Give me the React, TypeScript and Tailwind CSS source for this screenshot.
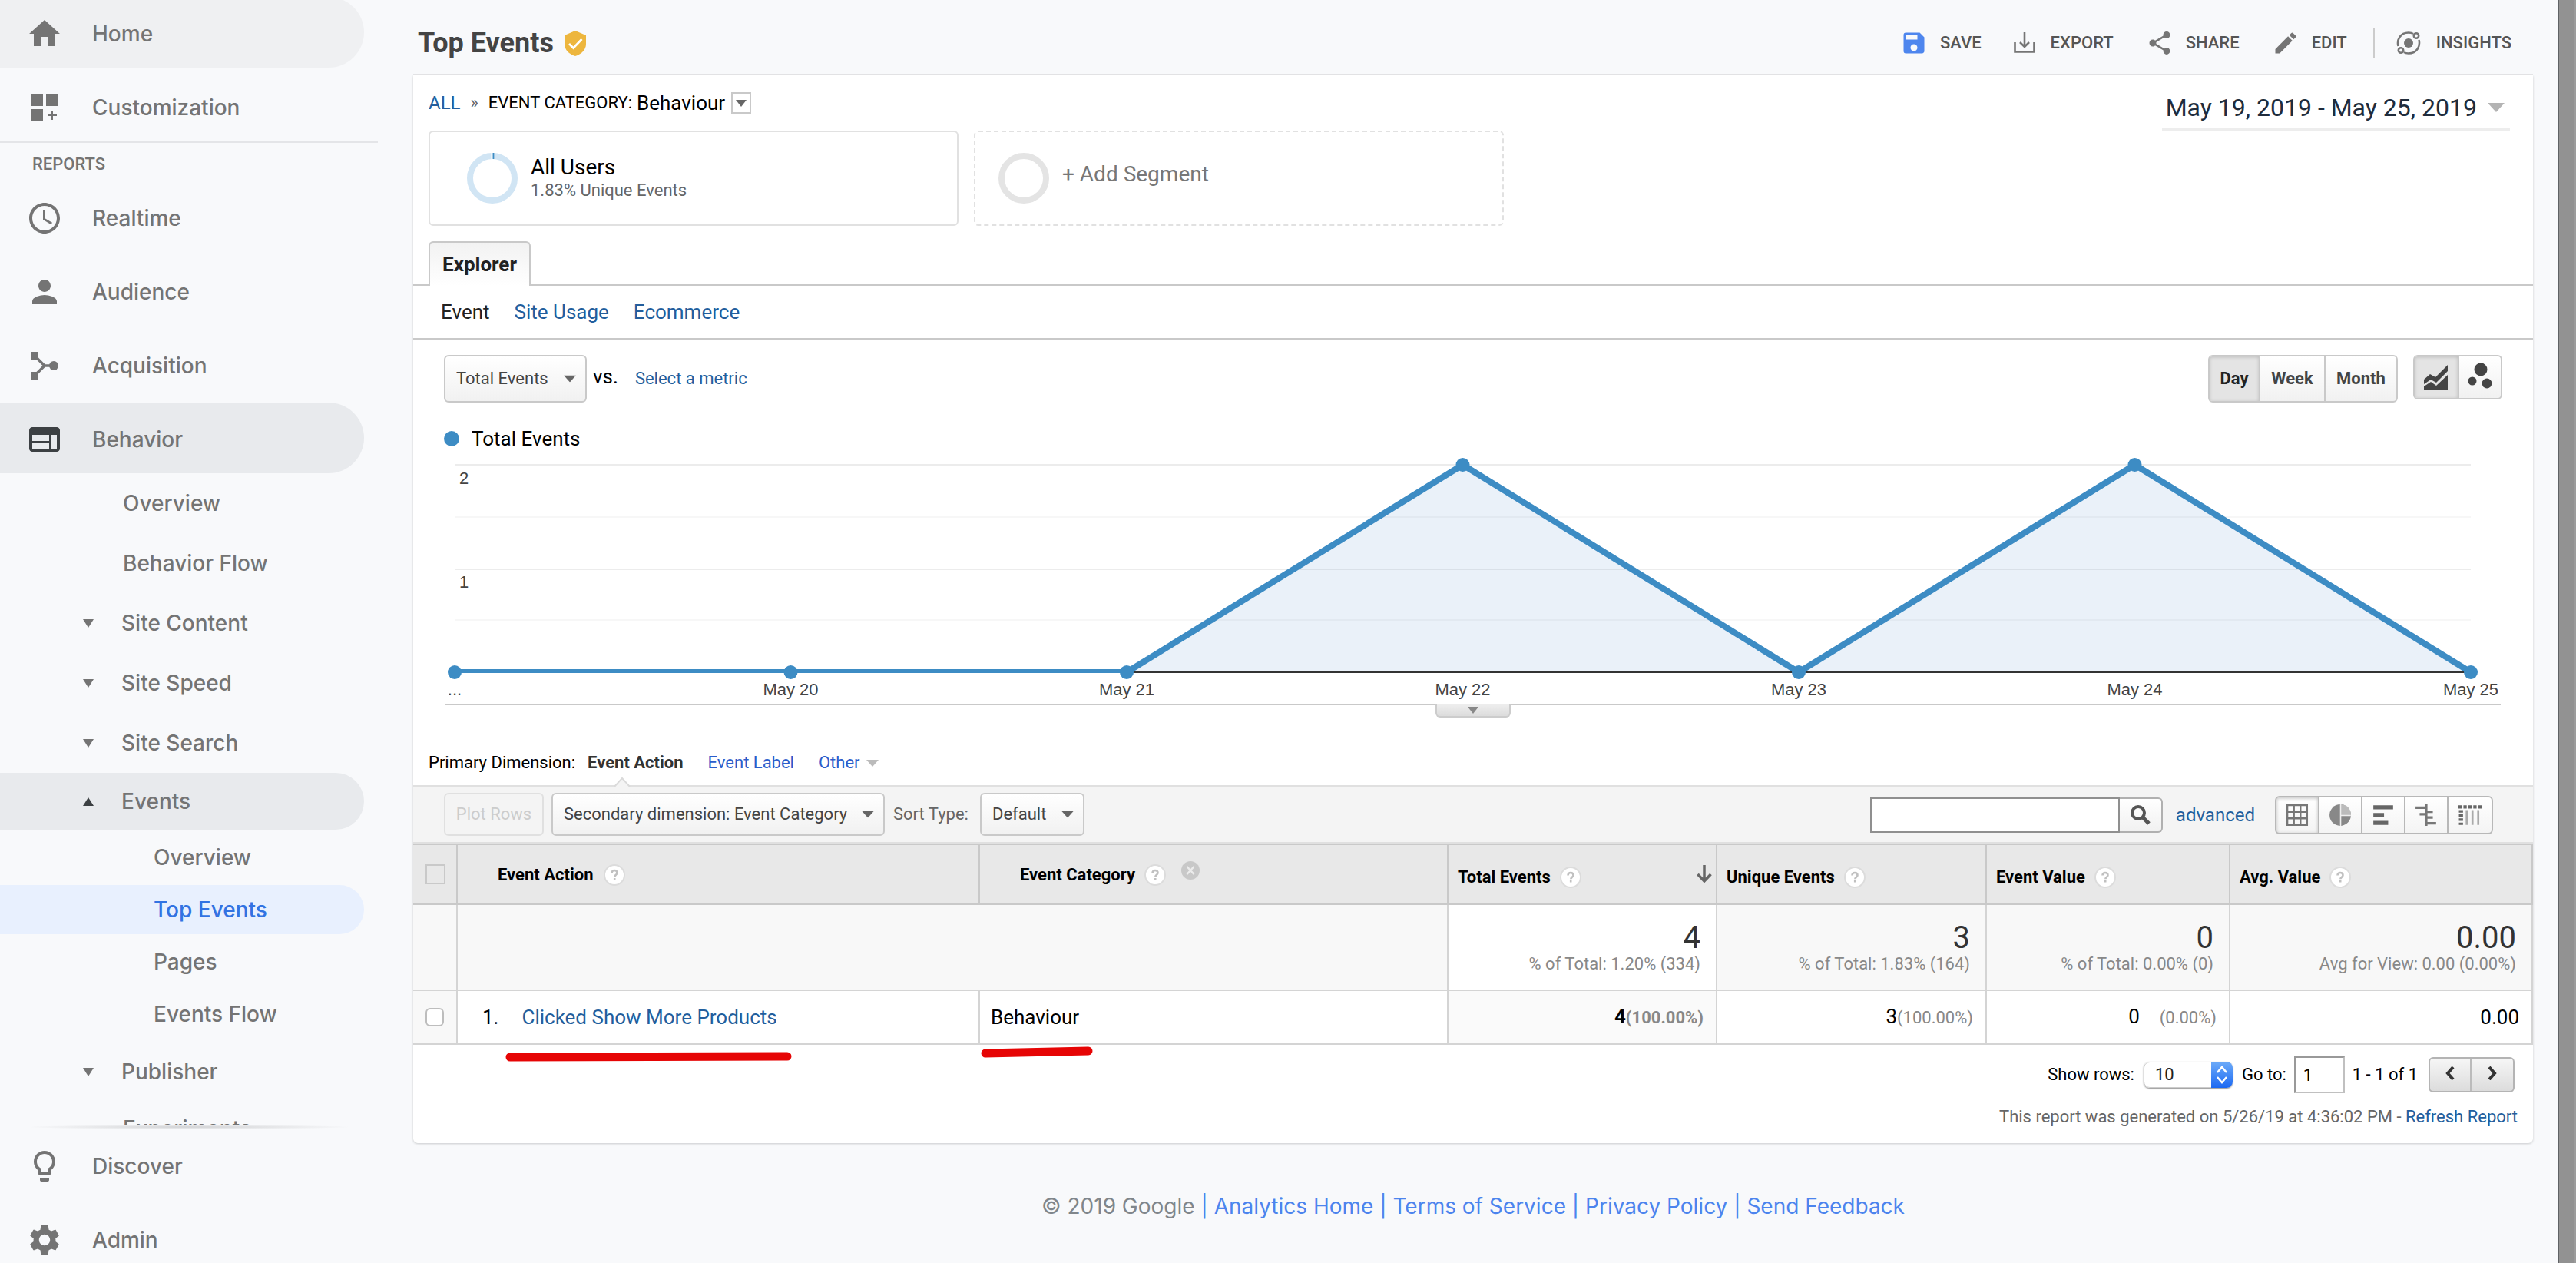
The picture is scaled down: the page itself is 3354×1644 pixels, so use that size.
import React from 'react';
import clsx from 'clsx';
import {
  MdAccessTime,
  MdEdit,
  MdHome,
  MdLightbulbOutline,
  MdPerson,
  MdSave,
  MdSettings,
  MdShare,
  MdWeb,
} from 'react-icons/md';

const DAYS = [
  { label: '...', value: 0 },
  { label: 'May 20', value: 0 },
  { label: 'May 21', value: 0 },
  { label: 'May 22', value: 2 },
  { label: 'May 23', value: 0 },
  { label: 'May 24', value: 2 },
  { label: 'May 25', value: 0 },
];

const CustomizationIcon = ({ className }: { className?: string }) => (
  <svg viewBox="0 0 24 24" className={className} fill="currentColor">
    <path d="M3 3h8v8H3zM13 3h8v8h-8zM3 13h8v8H3zM16.5 14h1v2.5H20v1h-2.5V20h-1v-2.5H14v-1h2.5z" />
  </svg>
);

const AcquisitionIcon = ({ className }: { className?: string }) => (
  <svg viewBox="0 0 24 24" className={className} fill="currentColor">
    <path d="M3 3h5v5H3zM3 16h5v5H3z" />
    <circle cx="18" cy="12" r="3" />
    <path d="M6 6l6 6-6 6M12 12h5" fill="none" stroke="currentColor" strokeWidth="1.8" />
  </svg>
);

const ExportIcon = ({ className }: { className?: string }) => (
  <svg viewBox="0 0 28 28" className={className} fill="none" stroke="currentColor" strokeWidth="2.6">
    <path d="M1.5 13v12.5h25V13M14 0v18M8 13l6 6 6-6" />
  </svg>
);

const InsightsIcon = ({ className }: { className?: string }) => (
  <svg viewBox="0 0 32 32" className={className} fill="none" stroke="currentColor" strokeWidth="2.6">
    <circle cx="16" cy="16" r="6" fill="currentColor" stroke="none" />
    <path d="M2.5 20C.5 12 5 2.5 16 2.5c2.5 0 4.5.5 6 1.5M29.5 12c2 8-2.500 17.500-13.500 17.500-2.500 0-4.500-.5-6-1.500" />
    <circle cx="26" cy="6.5" r="3.2" />
    <circle cx="6" cy="25.5" r="3.2" />
  </svg>
);

const ShieldIcon = () => (
  <svg viewBox="0 0 28 33" className="h-[33px] w-7">
    <path d="M14 0l14 6v11c0 8-6 13.500-14 16C6 30.500 0 25 0 17V6z" fill="#edb63e" />
    <path d="M6 17l5.500 5.500L22.500 11" fill="none" stroke="#fff" strokeWidth="2.8" />
  </svg>
);

const Caret = ({ className, up = false }: { className?: string; up?: boolean }) => (
  <svg viewBox="0 0 14 10" preserveAspectRatio="none" className={clsx('shrink-0', className)} fill="currentColor">
    <path d={up ? 'M0 10h14L7 0z' : 'M0 0h14L7 10z'} />
  </svg>
);

const Help = () => (
  <svg viewBox="0 0 28 28" className="h-7 w-7 shrink-0" role="img" aria-label="Help">
    <circle cx="14" cy="14" r="13" fill="#fff" stroke="#dcdcdc" strokeWidth="2" />
    <path
      d="M10.500 11.500c0-2 1.500-3.500 3.500-3.500s3.500 1.300 3.500 3.200c0 2.400-3.200 2.600-3.200 5.100M14.200 18v2.600"
      fill="none"
      stroke="#c0c0c0"
      strokeWidth="2.6"
    />
  </svg>
);

interface NavItemProps {
  label: string;
  icon: React.ReactNode;
  className?: string;
}

function NavItem({ label, icon, className }: NavItemProps) {
  return (
    <a href="#" className={clsx('flex h-[92px] w-[474px] items-center rounded-r-full pt-1 pl-[34px]', className)}>
      {icon}
      <span className="pl-[38px]">{label}</span>
    </a>
  );
}

function NavGroup({ label, open = false }: { label: string; open?: boolean }) {
  return (
    <button
      type="button"
      className={clsx(
        'flex w-[474px] shrink-0 items-center gap-9 pl-[108px] text-left',
        open ? 'h-[74px] rounded-r-full bg-[#e8eaed]' : 'h-[78px]'
      )}
    >
      <Caret up={open} className={clsx('h-[11px] w-[14px]', open && 'text-[#3c4043]')} />
      {label}
    </button>
  );
}

function Sidebar() {
  const icon = 'h-12 w-12';
  return (
    <aside className="flex w-[492px] shrink-0 flex-col font-['Inter',sans-serif] text-[28px] leading-9 font-medium text-[#747474]">
      <nav className="-mt-1 flex min-h-0 flex-1 flex-col overflow-hidden *:shrink-0">
        <NavItem label="Home" icon={<MdHome className={icon} />} className="bg-[#eff0f2]" />
        <NavItem label="Customization" icon={<CustomizationIcon className={icon} />} className="mt-1" />
        <div className="h-[52px] border-t-2 border-[#e4e5e8] pt-3 pl-[42px] font-['Roboto',sans-serif] text-[22px] leading-8">
          REPORTS
        </div>
        <NavItem label="Realtime" icon={<MdAccessTime className={icon} />} />
        <NavItem label="Audience" icon={<MdPerson className={icon} />} className="mt-1" />
        <NavItem label="Acquisition" icon={<AcquisitionIcon className={icon} />} className="mt-1" />
        <NavItem
          label="Behavior"
          icon={<MdWeb className="h-12 w-12 text-[#3c4043]" />}
          className="mt-1 bg-[#e8eaed]"
        />
        {['Overview', 'Behavior Flow'].map((label) => (
          <a key={label} href="#" className="flex h-[78px] items-center pl-40">
            {label}
          </a>
        ))}
        <NavGroup label="Site Content" />
        <NavGroup label="Site Speed" />
        <NavGroup label="Site Search" />
        <NavGroup label="Events" open />
        <div className="pb-1">
          {['Overview', 'Top Events', 'Pages', 'Events Flow'].map((label) => (
            <a
              key={label}
              href="#"
              className={clsx(
                'mt-1 flex h-16 w-[474px] items-center rounded-r-full pl-[200px]',
                label === 'Top Events' && 'bg-[#e8f0fe] text-[#3273e2]'
              )}
            >
              {label}
            </a>
          ))}
        </div>
        <NavGroup label="Publisher" />
        <a href="#" className="flex h-[70px] items-center pl-40">
          Experiments
        </a>
      </nav>
      <div className="mx-8 h-[6px] rounded-[50%] bg-radial from-[#d0d1d3] to-[#f8f9fb] to-70%" />
      <NavItem label="Discover" icon={<MdLightbulbOutline className={icon} />} />
      <div className="mt-1 h-[78px] overflow-hidden">
        <NavItem label="Admin" icon={<MdSettings className={icon} />} />
      </div>
    </aside>
  );
}

function ReportHeader() {
  const action = 'flex items-center gap-5';
  return (
    <header className="flex h-[98px] items-center justify-between border-b-2 border-[#e3e4e6] pt-4 pr-7 pl-[6px]">
      <h1 className="flex items-center gap-[14px] text-[36px] leading-10 font-bold text-[#444]">
        Top Events
        <ShieldIcon />
      </h1>
      <div className="flex items-center gap-[42px] text-[22px] leading-7 font-medium text-[#555]">
        <button type="button" className="flex items-center gap-4">
          <MdSave className="h-9 w-9 text-[#4e86ee]" />
          SAVE
        </button>
        <button type="button" className={action}>
          <ExportIcon className="h-7 w-7 text-[#757575]" />
          EXPORT
        </button>
        <button type="button" className="flex items-center gap-4">
          <MdShare className="h-9 w-9 text-[#757575]" />
          SHARE
        </button>
        <button type="button" className="flex items-center gap-4">
          <MdEdit className="h-9 w-9 text-[#757575]" />
          EDIT
        </button>
        <div className="-ml-2 flex items-center gap-7">
          <span className="h-[38px] w-[2px] bg-[#ccc]" />
          <button type="button" className={action}>
            <InsightsIcon className="h-8 w-8 text-[#757575]" />
            INSIGHTS
          </button>
        </div>
      </div>
    </header>
  );
}

function Segments() {
  return (
    <div className="flex gap-5 pl-5">
      <button
        type="button"
        className="flex h-[124px] w-[690px] items-center gap-[17px] rounded-md border-2 border-[#e1e1e1] pl-12 text-left"
      >
        <svg viewBox="0 0 66 66" className="h-[66px] w-[66px]" fill="none" strokeWidth="8">
          <circle cx="33" cy="33" r="29" stroke="#d1e5f4" />
          <path d="M34 0v8" stroke="#fff" strokeWidth="5" />
          <path d="M34.500 0v8" stroke="#3d8cc4" strokeWidth="2" />
        </svg>
        <span>
          <span className="block text-[28px] leading-8 text-black">All Users</span>
          <span className="block text-[22px] leading-7 text-[#666]">1.83% Unique Events</span>
        </span>
      </button>
      <button
        type="button"
        className="flex h-[124px] w-[690px] items-center gap-[17px] rounded-md border-2 border-dashed border-[#e1e1e1] pl-[30px] text-left"
      >
        <svg viewBox="0 0 66 66" className="h-[66px] w-[66px]" fill="none">
          <circle cx="33" cy="33" r="29" stroke="#e4e4e4" strokeWidth="8" />
        </svg>
        <span className="pb-[10px] text-[28px] leading-8 text-[#777]">+ Add Segment</span>
      </button>
    </div>
  );
}

interface DropdownProps {
  label: string;
  value: string;
  className: string;
}

function Dropdown({ label, value, className }: DropdownProps) {
  return (
    <div className={clsx('relative text-[22px] leading-7 text-[#444]', className)}>
      <select
        aria-label={label}
        className="h-full w-full appearance-none rounded-md border-2 border-[#c9c9c9] bg-linear-to-b from-white to-[#f1f1f1] pl-[14px]"
      >
        <option>{value}</option>
      </select>
      <Caret className="pointer-events-none absolute top-1/2 right-[14px] h-[9px] w-4 -translate-y-1/2 text-[#666]" />
    </div>
  );
}

function ChartControls() {
  return (
    <div className="flex items-start justify-between pt-5 pr-10 pl-10">
      <div className="flex items-center">
        <Dropdown label="Metric" value="Total Events" className="h-[62px] w-[186px]" />
        <span className="pb-[6px] pl-2 text-[26px] leading-8">vs.</span>
        <a href="#" className="pl-[22px] text-[22px] leading-7 text-[#225e9d]">
          Select a metric
        </a>
      </div>
      <div className="flex items-start gap-5">
        <div className="flex h-[62px] divide-x-2 divide-[#c9c9c9] overflow-hidden rounded-md border-2 border-[#c9c9c9] bg-linear-to-b from-white to-[#f1f1f1] text-[22px] leading-7 font-bold text-[#444]">
          <button type="button" className="w-[66px] bg-[#e4e4e4] text-[#222] shadow-[inset_0_1px_4px_#bbb]">
            Day
          </button>
          <button type="button" className="w-[85px]">
            Week
          </button>
          <button type="button" className="w-[92px]">
            Month
          </button>
        </div>
        <div className="flex h-[58px] overflow-hidden rounded-md border-2 border-[#c9c9c9] bg-linear-to-b from-white to-[#f1f1f1] text-[#444]">
          <button
            type="button"
            aria-label="Line chart"
            className="flex w-[58px] items-center justify-center border-r-2 border-[#c9c9c9] bg-[#e4e4e4] shadow-[inset_0_1px_4px_#bbb]"
          >
            <svg viewBox="0 0 32 32" className="h-8 w-8" fill="currentColor">
              <path d="M0 19l8-7 7 4L31 0v8L16 23l-7-4-9 6z" />
              <path d="M0 32v-4l9-6 7 5 15-14v19z" />
            </svg>
          </button>
          <button type="button" aria-label="Motion chart" className="flex w-[54px] items-center justify-center">
            <svg viewBox="0 0 34 34" className="mb-1 h-[34px] w-[34px]" fill="currentColor">
              <circle cx="18" cy="9" r="8.5" />
              <circle cx="7" cy="24" r="5.5" />
              <circle cx="26" cy="27" r="6.5" />
            </svg>
          </button>
        </div>
      </div>
    </div>
  );
}

function EventsChart() {
  const baseline = 289;
  const points = DAYS.map((day, i) => ({
    ...day,
    x: 54 + i * 437.5,
    y: baseline - day.value * 135,
  }));
  const line = points.map((p) => `${p.x},${p.y}`).join(' ');

  return (
    <svg
      viewBox="0 0 2760 330"
      className="block w-full font-['Liberation_Sans',Arial,sans-serif] text-[22px]"
      role="img"
      aria-label="Total Events per day"
    >
      <defs>
        <clipPath id="plot">
          <rect x="54" y="0" width="2625" height="290" />
        </clipPath>
      </defs>
      <path d="M54 19h2625M54 155h2625" stroke="#ececec" strokeWidth="2" />
      <path d="M54 87h2625M54 221h2625" stroke="#f7f7f7" strokeWidth="2" />
      <polygon points={`54,${baseline} ${line} 2679,${baseline}`} fill="#3d84c4" fillOpacity="0.11" />
      <path d={`M54 ${baseline}h2625`} stroke="#333" strokeWidth="2" />
      <polyline points={line} fill="none" stroke="#3d8cc4" strokeWidth="8" clipPath="url(#plot)" />
      {points.map((p) => (
        <circle key={p.label} cx={p.x} cy={p.y} r="9" fill="#3d8cc4" />
      ))}
      <g fill="#444">
        <text x="60" y="44">2</text>
        <text x="60" y="179">1</text>
        {points.map((p) => (
          <text key={p.label} x={p.x} y="319" textAnchor="middle">
            {p.label}
          </text>
        ))}
      </g>
    </svg>
  );
}

const VIEW_ICONS: { name: string; icon: React.ReactNode }[] = [
  {
    name: 'Data table',
    icon: <path d="M2 2h24v24H2zM10 2v24M18 2v24M2 10h24M2 18h24" fill="none" stroke="#777" strokeWidth="2.2" />,
  },
  {
    name: 'Percentage',
    icon: (
      <>
        <circle cx="14" cy="14" r="13" fill="#888" />
        <path d="M15 1v13h12A12 12 0 0 0 15 1z" fill="#bbb" />
        <path d="M14.500 1v13.500H27M14.500 14v13" stroke="#eee" strokeWidth="1.5" fill="none" />
      </>
    ),
  },
  {
    name: 'Performance',
    icon: <path d="M2 2h24v5H2zM2 11.500h13v5H2zM2 21h18v5H2z" fill="#666" />,
  },
  {
    name: 'Comparison',
    icon: (
      <path d="M14 1v26M1 5h13M6 13h8M14 10h8M14 17h8M14 24h12" fill="none" stroke="#777" strokeWidth="3" />
    ),
  },
  {
    name: 'Pivot',
    icon: (
      <>
        <path d="M0 4h28" stroke="#666" strokeWidth="4" strokeDasharray="4 2" />
        <path d="M3 8v18" stroke="#666" strokeWidth="5" strokeDasharray="3 2" />
        <path d="M10 8v18M17 8v18M24 8v18" stroke="#aaa" strokeWidth="2.5" />
      </>
    ),
  },
];

function TableToolbar() {
  return (
    <div className="flex h-[74px] items-center justify-between border-b-2 border-[#e0e0e0] bg-[#f4f4f4] pr-[52px] pl-10">
      <div className="flex items-center text-[22px] leading-7">
        <button type="button" disabled className="h-14 w-[130px] rounded-md border-2 border-[#e0e0e0] text-[#ccc]">
          Plot Rows
        </button>
        <Dropdown
          label="Secondary dimension"
          value="Secondary dimension: Event Category"
          className="ml-[10px] h-14 w-[434px]"
        />
        <span className="pr-[15px] pl-[11px] text-[#666]">Sort Type:</span>
        <Dropdown label="Sort Type" value="Default" className="h-14 w-[136px]" />
      </div>
      <div className="flex items-center pt-[2px]">
        <div className="flex h-[46px]">
          <input
            type="text"
            aria-label="Search"
            className="w-[325px] border-2 border-[#8f8f8f] bg-white px-2 text-[22px]"
          />
          <button
            type="button"
            aria-label="Search"
            className="flex w-14 items-center justify-center rounded-r-md border-2 border-l-0 border-[#b0b0b0] bg-linear-to-b from-white to-[#f1f1f1]"
          >
            <svg viewBox="0 0 28 28" className="h-7 w-7" fill="none" stroke="#555">
              <circle cx="11" cy="11" r="8" strokeWidth="4" />
              <path d="M17 17l8 8" strokeWidth="5" />
            </svg>
          </button>
        </div>
        <a href="#" className="pr-[26px] pl-[17px] text-[24px] leading-7 text-[#225e9d]">
          advanced
        </a>
        <div className="flex h-[50px] divide-x-2 divide-[#b8b8b8] overflow-hidden rounded-md border-2 border-[#b8b8b8] bg-linear-to-b from-white to-[#f4f4f4]">
          {VIEW_ICONS.map(({ name, icon }) => (
            <button
              key={name}
              type="button"
              aria-label={name}
              className={clsx(
                'flex w-14 items-center justify-center',
                name === 'Data table' && 'shadow-[inset_0_1px_4px_#bbb]'
              )}
            >
              <svg viewBox="0 0 28 28" className="h-[30px] w-[30px]">
                {icon}
              </svg>
            </button>
          ))}
        </div>
      </div>
    </div>
  );
}

function MetricHeader({ label, sorted = false }: { label: string; sorted?: boolean }) {
  return (
    <th className="border-y-2 border-r-2 border-[#c9c9c9] bg-[#e8e8e8] pt-2 pr-1 pl-3 text-left">
      <div className="flex items-center gap-3">
        {label}
        <Help />
        {sorted && (
          <svg viewBox="0 0 22 24" className="mb-2 ml-auto h-6 w-[22px]" fill="none" stroke="#666" strokeWidth="3.5">
            <path d="M11 0v21M2.500 12l8.500 9 8.500-9" />
          </svg>
        )}
      </div>
    </th>
  );
}

function SummaryCell({ total, note, className }: { total: string; note: string; className?: string }) {
  return (
    <td className={clsx('border-r-2 border-b-2 border-[#d4d4d4] pt-1 pr-5 text-right', className)}>
      <div className="text-[40px] leading-10 text-[#333]">{total}</div>
      <div className="text-[22px] leading-7 text-[#888]">{note}</div>
    </td>
  );
}

function EventsTable() {
  const head = 'border-y-2 border-r-2 border-[#c9c9c9] bg-[#e8e8e8]';
  const cell = 'border-r-2 border-b-2 border-[#d4d4d4]';
  return (
    <div className="relative">
      <table className="w-full table-fixed border-separate border-spacing-0 text-[26px] leading-8 text-black">
        <colgroup>
          <col className="w-[58px]" />
          <col />
          <col className="w-[610px]" />
          <col className="w-[350px]" />
          <col className="w-[351px]" />
          <col className="w-[317px]" />
          <col className="w-[394px]" />
        </colgroup>
        <thead>
          <tr className="h-20 text-[22px] leading-7 font-bold">
            <th className={clsx(head, 'pl-4')}>
              <input
                type="checkbox"
                aria-label="Select all rows"
                className="block h-[26px] w-[26px] appearance-none border-2 border-[#c9c9c9]"
              />
            </th>
            <th className={clsx(head, 'pt-[2px] pl-[52px]')}>
              <div className="flex items-center gap-[14px]">
                Event Action
                <Help />
              </div>
            </th>
            <th className={clsx(head, 'pt-[2px] pl-[52px]')}>
              <div className="flex items-center gap-3">
                Event Category
                <Help />
                <button type="button" aria-label="Remove dimension" className="mb-3 ml-2">
                  <svg viewBox="0 0 24 24" className="h-6 w-6">
                    <circle cx="12" cy="12" r="12" fill="#c8c8c8" />
                    <path d="M7.500 7l9 10M16.500 7l-9 10" stroke="#ececec" strokeWidth="2.5" />
                  </svg>
                </button>
              </div>
            </th>
            <MetricHeader label="Total Events" sorted />
            <MetricHeader label="Unique Events" />
            <MetricHeader label="Event Value" />
            <MetricHeader label="Avg. Value" />
          </tr>
        </thead>
        <tbody>
          <tr className="h-28 bg-[#f8f8f8]">
            <td className={cell} />
            <td colSpan={2} className={cell} />
            <SummaryCell total="4" note="% of Total: 1.20% (334)" className="bg-white" />
            <SummaryCell total="3" note="% of Total: 1.83% (164)" />
            <SummaryCell total="0" note="% of Total: 0.00% (0)" />
            <SummaryCell total="0.00" note="Avg for View: 0.00 (0.00%)" />
          </tr>
          <tr className="h-[70px]">
            <td className={clsx(cell, 'bg-[#f8f8f8] pl-4')}>
              <input
                type="checkbox"
                aria-label="Select row 1"
                className="block h-6 w-6 appearance-none rounded-md border-2 border-[#bdbdbd] bg-white"
              />
            </td>
            <td className={clsx(cell, 'pl-8')}>
              1.
              <a href="#" className="pl-[30px] text-[#225e9d]">
                Clicked Show More Products
              </a>
            </td>
            <td className={clsx(cell, 'pl-[14px]')}>Behaviour</td>
            <td className={clsx(cell, 'bg-[#fafafa] pr-4 text-right font-bold')}>
              4<span className="text-[22px] text-[#888]">(100.00%)</span>
            </td>
            <td className={clsx(cell, 'pr-4 text-right')}>
              3<span className="text-[22px] text-[#888]">(100.00%)</span>
            </td>
            <td className={clsx(cell, 'pr-4 text-right')}>
              0<span className="pl-[26px] text-[22px] text-[#888]">(0.00%)</span>
            </td>
            <td className={clsx(cell, 'pr-4 text-right')}>0.00</td>
          </tr>
        </tbody>
      </table>
      {/* hand-drawn marker strokes under the highlighted row */}
      <svg
        viewBox="0 0 780 24"
        className="pointer-events-none absolute top-full left-[116px] h-6 w-[780px]"
        stroke="#e60505"
        strokeWidth="11"
        strokeLinecap="round"
      >
        <path d="M10 16L371 15M629 11L763 8" />
      </svg>
    </div>
  );
}

function Pagination() {
  return (
    <div className="pb-1 text-[22px] leading-7">
      <div className="flex h-[64px] items-center justify-end pt-[14px] pr-6">
        <label htmlFor="rows">Show rows:</label>
        <div className="relative ml-3 h-[34px] w-[116px] overflow-hidden rounded-lg shadow-[0_1px_2px_#888]">
          <select
            id="rows"
            className="h-full w-full appearance-none rounded-lg border border-[#ccc] bg-white pl-[14px] text-[#222]"
          >
            <option>10</option>
          </select>
          <svg
            viewBox="0 0 28 34"
            className="pointer-events-none absolute top-0 right-0 h-[34px] w-7 bg-linear-to-b from-[#6caaf8] to-[#1b68f2]"
            fill="none"
            stroke="#fff"
            strokeWidth="2.5"
          >
            <path d="M8 14l6-7 6 7M8 20l6 7 6-7" />
          </svg>
        </div>
        <label htmlFor="page" className="pr-[10px] pl-3">
          Go to:
        </label>
        <input
          id="page"
          type="text"
          defaultValue="1"
          className="h-12 w-[66px] border-2 border-[#c0c0c0] border-t-[#999] border-l-[#999] bg-white px-[10px]"
        />
        <span className="pr-[14px] pl-[10px]">1 - 1 of 1</span>
        <div className="flex h-[46px] divide-x-2 divide-[#bbb] overflow-hidden rounded-md border-2 border-[#b4b4b4] bg-linear-to-b from-[#f6f6f6] to-[#dcdcdc]">
          <button type="button" aria-label="Previous page" className="flex w-[54px] items-center justify-center">
            <svg viewBox="0 0 12 18" className="mb-1 h-[18px] w-3" fill="none" stroke="#333" strokeWidth="4">
              <path d="M10 1L3 9l7 8" />
            </svg>
          </button>
          <button type="button" aria-label="Next page" className="flex w-[54px] items-center justify-center">
            <svg viewBox="0 0 12 18" className="mb-1 h-[18px] w-3" fill="none" stroke="#333" strokeWidth="4">
              <path d="M2 1l7 8-7 8" />
            </svg>
          </button>
        </div>
      </div>
      <p className="py-4 pr-5 text-right text-[#666]">
        This report was generated on 5/26/19 at 4:36:02 PM -{' '}
        <a href="#" className="text-[#225e9d]">
          Refresh Report
        </a>
      </p>
    </div>
  );
}

export default function App() {
  return (
    <div className="flex h-screen overflow-hidden bg-[#f8f9fb] font-['Roboto',sans-serif] text-black">
      <Sidebar />
      <main className="min-w-0 flex-1 pr-8 pl-[46px]">
        <ReportHeader />
        <section className="rounded-b-md bg-white shadow-[0_1px_3px_#c8cacc]">
          <div className="flex h-[72px] items-center justify-between pr-[30px] pl-5">
            <div className="flex items-center text-[22px] leading-8">
              <a href="#" className="text-[24px] text-[#225e9d]">
                ALL
              </a>
              <span className="px-[13px] text-[#666]">»</span>
              EVENT CATEGORY:
              <span className="pl-[6px] text-[26px]">Behaviour</span>
              <button
                type="button"
                aria-label="Choose category"
                className="ml-2 flex h-7 w-[26px] items-center justify-center border-2 border-[#c9c9c9] text-[#666]"
              >
                <Caret className="h-[9px] w-[14px]" />
              </button>
            </div>
            <button
              type="button"
              className="mt-[14px] flex h-[60px] items-center gap-[14px] border-b-4 border-[#ededed] pt-[2px] pr-[7px] pl-[5px] text-[32px] leading-10 text-[#202c3c]"
            >
              May 19, 2019 - May 25, 2019
              <Caret className="h-3 w-[22px] text-[#b4b4b4]" />
            </button>
          </div>
          <Segments />
          <div className="mt-5 flex h-[58px] border-b-2 border-[#c9c9c9] pl-5">
            <button
              type="button"
              className="h-[58px] w-[133px] rounded-t-md border-2 border-b-0 border-[#c9c9c9] bg-linear-to-b from-[#f2f2f2] to-white text-[26px] leading-8 font-bold text-[#222]"
            >
              Explorer
            </button>
          </div>
          <div className="flex h-[70px] items-center gap-8 border-b-2 border-[#c9c9c9] pl-9 text-[26px] leading-8 text-[#225e9d]">
            <span className="text-[#222]">Event</span>
            <a href="#">Site Usage</a>
            <a href="#">Ecommerce</a>
          </div>
          <ChartControls />
          <div className="mt-8 flex h-[30px] items-center gap-4 pl-10 text-[26px] leading-8">
            <span className="h-5 w-5 rounded-full bg-[#3d8cc4]" />
            Total Events
          </div>
          <EventsChart />
          <div className="mx-[42px] flex h-[18px] justify-center border-t-2 border-[#c9c9c9]">
            <button
              type="button"
              aria-label="Toggle annotations"
              className="-mt-[2px] flex h-[18px] w-[98px] items-center justify-center rounded-b-md border-2 border-t-0 border-[#ccc] bg-linear-to-b from-[#efefef] to-[#dcdcdc] text-[#888]"
            >
              <Caret className="h-[9px] w-[14px]" />
            </button>
          </div>
          <div className="mt-[30px] flex h-[60px] items-center border-b-2 border-[#e0e0e0] pl-5 text-[22px] leading-7 text-[#2a5dcb]">
            <span className="text-black">Primary Dimension:</span>
            <span className="relative flex h-full items-center pl-4 font-bold text-[#333]">
              Event Action
              <svg
                viewBox="0 0 22 12"
                className="absolute -bottom-[2px] left-[50px] h-3 w-[22px]"
                fill="#f4f4f4"
                stroke="#dadada"
                strokeWidth="2"
              >
                <path d="M1 12L11 1l10 11" />
              </svg>
            </span>
            <a href="#" className="pl-8">
              Event Label
            </a>
            <button type="button" className="flex items-center gap-2 pl-8">
              Other
              <Caret className="h-[9px] w-4 text-[#bbb]" />
            </button>
          </div>
          <TableToolbar />
          <EventsTable />
          <Pagination />
        </section>
        <footer className="pt-16 text-center font-['Inter',sans-serif] text-[28px] leading-9 text-[#4c84ee]">
          <span className="text-[#80868b]">© 2019 Google</span> | <a href="#">Analytics Home</a> |{' '}
          <a href="#">Terms of Service</a> | <a href="#">Privacy Policy</a> | <a href="#">Send Feedback</a>
        </footer>
      </main>
      <div className="w-6 shrink-0 border-r-2 border-l-2 border-r-[#9c9c9c] border-l-[#5f6265] bg-[#929292]" />
    </div>
  );
}
